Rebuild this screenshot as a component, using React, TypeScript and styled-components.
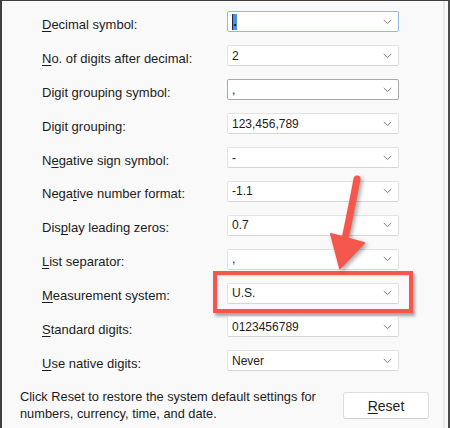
import React from "react";
import styled, { createGlobalStyle, css } from "styled-components";

const GlobalStyle = createGlobalStyle`
  html, body {
    margin: 0;
    padding: 0;
    background: #f9f9f9;
  }
  * {
    box-sizing: border-box;
  }
`;

const Frame = styled.div`
  position: relative;
  width: 450px;
  height: 428px;
  display: flex;
  background: #f9f9f9;
  border-left: 2px solid #3f3f3f;
  border-top: 1px solid #3f3f3f;
  border-right: 2px solid #4a4a4a;
  font-family: "Liberation Sans", Arial, sans-serif;
  color: #1c1c1c;
  overflow: hidden;
`;

const Panel = styled.div`
  flex: 1;
  display: flex;
  flex-direction: column;
  border-right: 2px solid #e8e8e8;
  margin-right: 3px;
`;

const Form = styled.div`
  display: grid;
  grid-template-columns: 185px 172px;
  grid-auto-rows: 33.9px;
  align-items: center;
  padding: 4px 0 0 40px;
`;

const Label = styled.label`
  font-size: 13px;
  padding-top: 5px;
  white-space: nowrap;
  u {
    text-decoration-thickness: 1px;
    text-underline-offset: 2px;
  }
`;

const Combo = styled.div<{ $state?: "focus" | "hover" }>`
  position: relative;
  height: 21px;
  display: flex;
  align-items: center;
  justify-content: space-between;
  padding: 0 6px 0 4px;
  background: #fff;
  border: 1px solid #e3e3e3;
  border-bottom-color: #d6d6d6;
  border-radius: 2px;
  font-size: 12px;
  color: #1c1c1c;
  ${(p) =>
    p.$state === "focus" &&
    css`
      border-color: #8fbbe8;
    `}
  ${(p) =>
    p.$state === "hover" &&
    css`
      border-color: #a9a9a9;
    `}
`;

const Selected = styled.span`
  display: inline-block;
  width: 5px;
  height: 16px;
  margin-top: 1px;
  line-height: 15px;
  background: #4c8fdc;
  border-left: 1px solid #1a2a48;
  color: #10203a;
  font-weight: bold;
  text-align: center;
  font-size: 13px;
`;

const Highlight = styled.div`
  position: absolute;
  left: -15px;
  right: -15px;
  top: -13px;
  bottom: -10px;
  border: 4.5px solid #f4574b;
  box-shadow: 2px 3px 3px rgba(0, 0, 0, 0.35),
    inset 1px 1px 2px rgba(0, 0, 0, 0.15);
  pointer-events: none;
`;

const Footer = styled.div`
  display: flex;
  align-items: center;
  justify-content: space-between;
  padding: 10px 14px 0 18px;
`;

const Note = styled.p`
  margin: 0;
  font-size: 12.8px;
  line-height: 17px;
`;

const ResetButton = styled.button`
  width: 86px;
  height: 27px;
  margin-top: 2px;
  background: #fff;
  border: 1px solid #dedede;
  border-bottom-color: #cfcfcf;
  border-radius: 3px;
  font-family: "Liberation Sans", Arial, sans-serif;
  font-size: 14px;
  color: #1c1c1c;
  u {
    text-underline-offset: 2px;
  }
`;

const Arrow = styled.svg`
  position: absolute;
  left: 0;
  top: 0;
  width: 450px;
  height: 428px;
  pointer-events: none;
  filter: drop-shadow(2px 2px 2px rgba(0, 0, 0, 0.35));
`;

function Chevron() {
  return (
    <svg width="9" height="6" viewBox="0 0 9 6">
      <polyline
        points="0.8,1 4.5,4.6 8.2,1"
        fill="none"
        stroke="#7a7a7a"
        strokeWidth="1"
      />
    </svg>
  );
}

type Row = {
  label: React.ReactNode;
  value: React.ReactNode;
  state?: "focus" | "hover";
  marked?: boolean;
};

const rows: Row[] = [
  {
    label: (
      <>
        <u>D</u>ecimal symbol:
      </>
    ),
    value: <Selected>.</Selected>,
    state: "focus",
  },
  {
    label: (
      <>
        <u>N</u>o. of digits after decimal:
      </>
    ),
    value: "2",
  },
  { label: "Digit grouping symbol:", value: ",", state: "hover" },
  { label: "Digit grouping:", value: "123,456,789" },
  {
    label: (
      <>
        N<u>e</u>gative sign symbol:
      </>
    ),
    value: "-",
  },
  {
    label: (
      <>
        Nega<u>t</u>ive number format:
      </>
    ),
    value: "-1.1",
  },
  {
    label: (
      <>
        Dis<u>p</u>lay leading zeros:
      </>
    ),
    value: "0.7",
  },
  {
    label: (
      <>
        <u>L</u>ist separator:
      </>
    ),
    value: ",",
  },
  {
    label: (
      <>
        <u>M</u>easurement system:
      </>
    ),
    value: "U.S.",
    marked: true,
  },
  {
    label: (
      <>
        <u>S</u>tandard digits:
      </>
    ),
    value: "0123456789",
  },
  {
    label: (
      <>
        <u>U</u>se native digits:
      </>
    ),
    value: "Never",
  },
];

export default function App() {
  return (
    <>
      <GlobalStyle />
      <Frame>
        <Panel>
          <Form>
            {rows.map((row, i) => (
              <React.Fragment key={i}>
                <Label>{row.label}</Label>
                <Combo $state={row.state}>
                  <span>{row.value}</span>
                  <Chevron />
                  {row.marked && <Highlight />}
                </Combo>
              </React.Fragment>
            ))}
          </Form>
          <Footer>
            <Note>
              Click Reset to restore the system default settings for
              <br />
              numbers, currency, time, and date.
            </Note>
            <ResetButton>
              <u>R</u>eset
            </ResetButton>
          </Footer>
        </Panel>
        <Arrow viewBox="0 0 450 428">
          <path
            d="M355 178 Q350 205 343 238"
            stroke="#f4574b"
            strokeWidth="7"
            strokeLinecap="round"
            fill="none"
          />
          <polygon
            points="329,233 362,242 338,267"
            fill="#f4574b"
            stroke="#f4574b"
            strokeWidth="2"
            strokeLinejoin="round"
          />
        </Arrow>
      </Frame>
    </>
  );
}
